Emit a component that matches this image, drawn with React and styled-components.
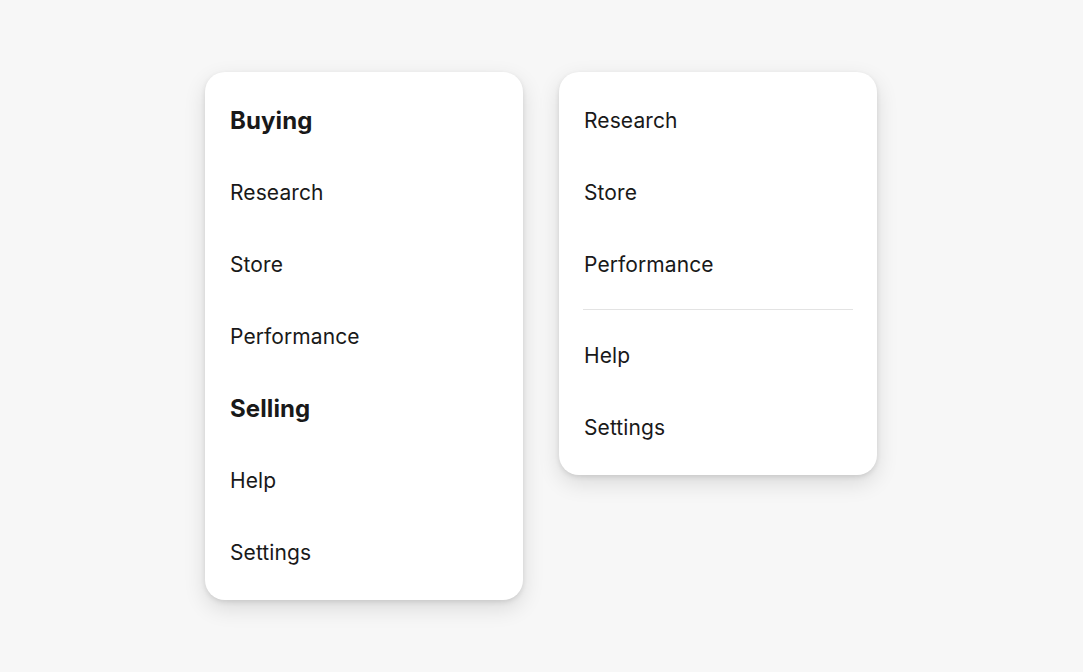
import styled, { createGlobalStyle } from "styled-components";

const GlobalStyle = createGlobalStyle`
  html, body {
    margin: 0;
    padding: 0;
    background: #f7f7f7;
    font-family: Inter, "Noto Sans", sans-serif;
    color: #191919;
  }
`;

const Page = styled.div`
  display: flex;
  align-items: flex-start;
  gap: 36px;
  padding: 72px 0 0 205px;
  min-height: 600px;
`;

const Menu = styled.div`
  width: 318px;
  box-sizing: border-box;
  padding: 12px 24px;
  background: #fff;
  border-radius: 20px;
  box-shadow: 0 8px 22px rgba(0, 0, 0, 0.12), 0 2px 5px rgba(0, 0, 0, 0.1);
`;

const Item = styled.div`
  height: 72px;
  display: flex;
  align-items: center;
  padding-left: 1px;
  font-size: ${(p) => (p.$heading ? "24px" : "21px")};
  font-weight: ${(p) => (p.$heading ? 700 : 400)};
  letter-spacing: 0.1px;
`;

const Divider = styled.hr`
  margin: 9px 0;
  border: none;
  border-top: 1px solid #e3e3e3;
`;

export default function App() {
  return (
    <>
      <GlobalStyle />
      <Page>
        <Menu>
          <Item $heading>Buying</Item>
          <Item>Research</Item>
          <Item>Store</Item>
          <Item>Performance</Item>
          <Item $heading>Selling</Item>
          <Item>Help</Item>
          <Item>Settings</Item>
        </Menu>
        <Menu>
          <Item>Research</Item>
          <Item>Store</Item>
          <Item>Performance</Item>
          <Divider />
          <Item>Help</Item>
          <Item>Settings</Item>
        </Menu>
      </Page>
    </>
  );
}
